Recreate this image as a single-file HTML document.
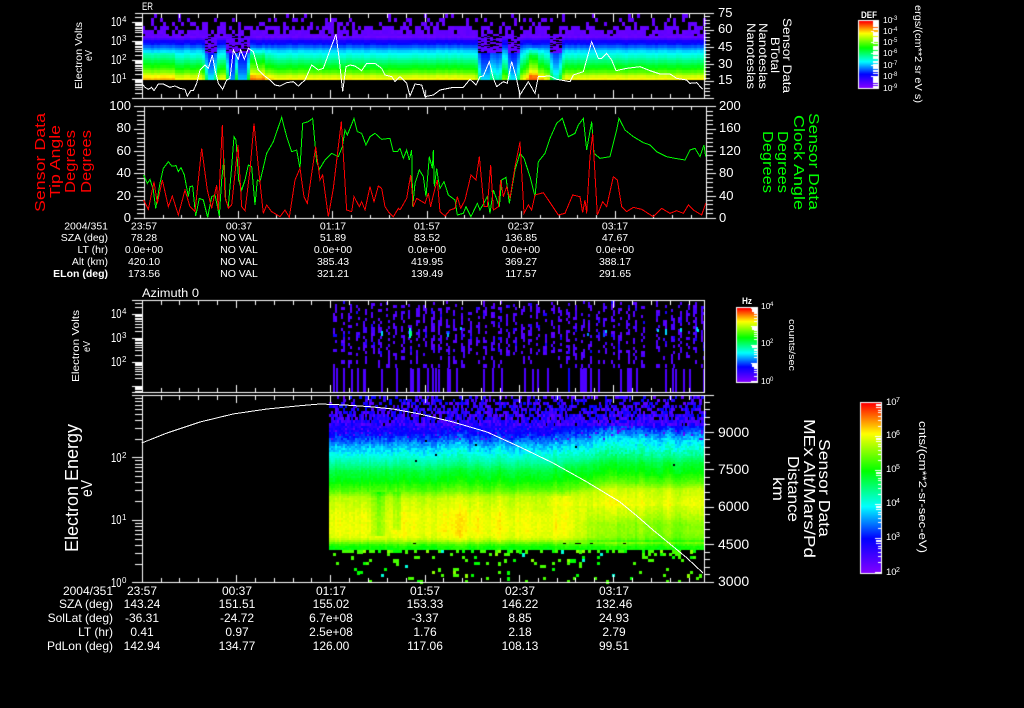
<!DOCTYPE html>
<html><head><meta charset="utf-8"><title>Sensor Data</title>
<style>
html,body{margin:0;padding:0;background:#000;width:1024px;height:708px;overflow:hidden}
#c{position:absolute;left:0;top:0;width:1024px;height:708px}
#s{position:absolute;left:0;top:0}
text{font-family:"Liberation Sans",sans-serif;fill:#fff}
.a{font-size:13px}.b{font-size:14px}
.t1 text{font-size:10.5px}.t2 text{font-size:12px}
.m text{text-anchor:middle}.e text{text-anchor:end}
.d text:not(.u){font-size:12.5px}
.u{font-size:8px}.v{font-size:8.5px}.w{font-size:6px}.x{font-size:9.5px}.y{font-size:7px}
polyline{fill:none;shape-rendering:crispEdges}
</style></head><body>
<canvas id="c" width="1024" height="708"></canvas>
<svg id="s" width="1024" height="708" viewBox="0 0 1024 708">
<!-- data lines -->
<g transform="scale(.33333)"><polyline stroke="#fff" stroke-width="3" points="425,250 435,262 445,268 455,262 462,272 475,252 490,252 510,262 525,258 540,265 555,268 562,288 572,272 580,272 590,250 600,210 615,195 625,205 637,165 645,210 655,250 668,268 680,240 690,235 700,150 715,178 722,150 733,178 745,145 760,155 775,210 790,225 810,240 825,255 840,258 860,248 880,245 895,258 915,240 935,195 955,210 970,205 990,150 1008,103 1018,180 1028,275 1038,200 1050,195 1065,198 1085,212 1100,190 1125,190 1145,205 1155,225 1175,230 1185,245 1200,230"/></g>
<g transform="translate(400,0) scale(.33333)"><polyline stroke="#fff" stroke-width="3" points="0,230 20,250 30,288 45,252 65,255 75,290 100,285 120,270 160,262 190,262 210,238 228,255 240,230 250,228 268,185 280,235 290,260 310,245 322,250 335,185 348,230 360,285 385,245 405,280 415,230 450,228 470,238 510,245 520,225 550,215 575,125 595,175 605,175 620,160 635,180 648,212 680,205 720,200 750,212 780,222 810,222 830,235 860,240 870,250 890,248 908,268"/></g>
<g transform="translate(0,100) scale(.33333)"><polyline stroke="#00ff00" stroke-width="3" points="431,225 442,250 450,238 460,270 467,325 480,250 490,205 505,185 515,198 528,197 535,215 543,203 553,225 565,290 570,260 578,258 587,348 598,295 610,300 623,352 635,290 645,285 658,348 665,240 672,175 677,300 685,320 695,200 702,110 708,120 716,240 725,270 735,240 745,195 755,200 765,315 772,240 780,245 800,160 820,125 845,52 860,110 875,155 890,150 900,205 908,70 925,65 938,55 950,185 958,208 975,180 995,160 1015,170 1027,140 1035,90 1042,105 1062,55 1072,95 1085,100 1098,135 1110,110 1125,100 1145,118 1170,115 1180,155 1192,155 1200,145"/>
<polyline stroke="#ff0000" stroke-width="3" points="431,300 445,328 462,245 472,310 487,240 505,320 517,288 535,345 555,270 570,320 585,335 605,145 622,270 635,325 650,255 655,330 667,75 675,290 685,325 695,315 714,135 725,320 735,332 750,210 762,70 775,200 790,340 800,315 815,335 840,350 855,330 868,352 885,240 900,205 912,290 922,310 947,140 960,240 968,225 985,350 1000,265 1024,65 1040,330 1055,335 1062,290 1078,320 1085,305 1095,330 1110,260 1122,305 1135,258 1145,265 1155,320 1165,335 1180,350 1195,325 1200,330"/></g>
<g transform="translate(400,100) scale(.33333)"><polyline stroke="#00ff00" stroke-width="3" points="0,145 10,175 20,150 28,180 35,150 38,320 45,250 58,210 70,230 78,290 88,170 97,205 100,150 103,260 110,205 115,240 120,265 132,245 145,285 165,300 172,345 190,340 198,320 213,350 232,310 240,330 262,290 270,340 280,270 298,320 305,240 318,232 328,310 345,210 360,160 372,175 390,230 405,290 415,185 435,160 450,115 470,70 487,55 505,110 525,100 535,75 550,55 560,150 575,65 582,160 600,175 630,170 650,90 657,55 675,90 700,110 730,128 750,135 770,155 800,170 825,175 855,180 870,150 885,145 900,170 912,135 917,170"/>
<polyline stroke="#ff0000" stroke-width="3" points="0,330 20,295 32,225 40,320 50,295 75,310 85,280 92,320 100,285 112,240 120,335 135,348 150,330 165,325 172,290 182,325 195,300 213,225 228,240 238,170 252,320 262,320 272,195 280,330 295,320 302,240 310,290 320,260 330,295 345,200 360,125 372,340 385,315 395,330 405,285 430,278 445,300 475,345 495,340 518,285 540,290 548,338 555,300 560,340 570,170 578,100 592,345 608,305 620,320 640,230 652,240 665,320 680,335 700,322 725,328 760,350 785,325 810,340 830,332 850,340 865,315 880,330 905,345 917,310"/></g>
<polyline stroke="#fff" stroke-width="1" points="141.7,443 167,433 200,422 233,414 267,409 300,405.7 320,404 345,405 370,406.7 393,409 420,414 453,422 487,432 520,447 553,463 587,482 620,502 637,516 653,530 670,544 687,558 703,573"/>

<!-- titles -->
<text x="142" y="10" font-size="11" textLength="11" lengthAdjust="spacingAndGlyphs">ER</text>
<text x="142" y="297" font-size="11.5" textLength="57" lengthAdjust="spacingAndGlyphs">Azimuth 0</text>

<!-- panel 1 labels -->
<text transform="translate(82,89) rotate(-90)" font-size="10" textLength="67" lengthAdjust="spacingAndGlyphs">Electron Volts</text>
<text transform="translate(92,61) rotate(-90)" font-size="10" textLength="11" lengthAdjust="spacingAndGlyphs">eV</text>
<g class="d">
<text x="111" y="26" textLength="10.5" lengthAdjust="spacingAndGlyphs">10</text><text x="122" y="22" class="u">4</text>
<text x="111" y="45" textLength="10.5" lengthAdjust="spacingAndGlyphs">10</text><text x="122" y="41" class="u">3</text>
<text x="111" y="64" textLength="10.5" lengthAdjust="spacingAndGlyphs">10</text><text x="122" y="60" class="u">2</text>
<text x="111" y="83" textLength="10.5" lengthAdjust="spacingAndGlyphs">10</text><text x="122" y="79" class="u">1</text>
</g>
<g class="a">
<text x="718" y="17">75</text><text x="718" y="33">60</text><text x="718" y="51">45</text><text x="718" y="68">30</text><text x="718" y="84">15</text>
</g>
<g font-size="12">
<text transform="translate(783,18) rotate(90)" textLength="75" lengthAdjust="spacingAndGlyphs">Sensor Data</text>
<text transform="translate(771,37) rotate(90)" textLength="36" lengthAdjust="spacingAndGlyphs">BTotal</text>
<text transform="translate(759,23) rotate(90)" textLength="66" lengthAdjust="spacingAndGlyphs">Nanoteslas</text>
<text transform="translate(747,23) rotate(90)" textLength="66" lengthAdjust="spacingAndGlyphs">Nanoteslas</text>
</g>
<!-- colorbar 1 -->
<text x="861" y="18" font-size="9.5" font-weight="bold" textLength="16" lengthAdjust="spacingAndGlyphs">DEF</text>
<g class="v">
<text x="883" y="23">10</text><text x="892" y="20" class="w">-3</text>
<text x="883" y="34">10</text><text x="892" y="31" class="w">-4</text>
<text x="883" y="45">10</text><text x="892" y="42" class="w">-5</text>
<text x="883" y="56">10</text><text x="892" y="53" class="w">-6</text>
<text x="883" y="68">10</text><text x="892" y="65" class="w">-7</text>
<text x="883" y="79">10</text><text x="892" y="76" class="w">-8</text>
<text x="883" y="91">10</text><text x="892" y="88" class="w">-9</text>
</g>
<text transform="translate(915,5) rotate(90)" font-size="10" textLength="98" lengthAdjust="spacingAndGlyphs">ergs/(cm**2 sr eV s)</text>

<!-- panel 2 labels -->
<g font-size="15">
<text style="fill:#f00" transform="translate(45,212) rotate(-90)" textLength="99" lengthAdjust="spacingAndGlyphs">Sensor Data</text>
<text style="fill:#f00" transform="translate(60,198) rotate(-90)" textLength="73" lengthAdjust="spacingAndGlyphs">Tip Angle</text>
<text style="fill:#f00" transform="translate(75,193) rotate(-90)" textLength="63" lengthAdjust="spacingAndGlyphs">Degrees</text>
<text style="fill:#f00" transform="translate(91,193) rotate(-90)" textLength="63" lengthAdjust="spacingAndGlyphs">Degrees</text>
</g>
<g font-size="15">
<text style="fill:#0f0" transform="translate(809,113) rotate(90)" textLength="97" lengthAdjust="spacingAndGlyphs">Sensor Data</text>
<text style="fill:#0f0" transform="translate(794,115) rotate(90)" textLength="95" lengthAdjust="spacingAndGlyphs">Clock Angle</text>
<text style="fill:#0f0" transform="translate(778,131) rotate(90)" textLength="62" lengthAdjust="spacingAndGlyphs">Degrees</text>
<text style="fill:#0f0" transform="translate(763,131) rotate(90)" textLength="62" lengthAdjust="spacingAndGlyphs">Degrees</text>
</g>
<g class="a e">
<text x="131" y="110">100</text><text x="131" y="132">80</text><text x="131" y="155">60</text><text x="131" y="177">40</text><text x="131" y="200">20</text><text x="131" y="222">0</text>
</g>
<g class="a">
<text x="719" y="110">200</text><text x="719" y="132">160</text><text x="719" y="155">120</text><text x="719" y="177">80</text><text x="719" y="200">40</text><text x="719" y="222">0</text>
</g>

<!-- table 1 -->
<g class="t1 e">
<text x="108" y="229.5">2004/351</text><text x="108" y="241">SZA (deg)</text><text x="108" y="253">LT (hr)</text><text x="108" y="265">Alt (km)</text><text x="108" y="277" font-weight="bold">ELon (deg)</text>
</g>
<g class="t1 m">
<text x="144" y="229.5">23:57</text><text x="239" y="229.5">00:37</text><text x="333" y="229.5">01:17</text><text x="427" y="229.5">01:57</text><text x="521" y="229.5">02:37</text><text x="615" y="229.5">03:17</text>
<text x="144" y="241">78.28</text><text x="239" y="241">NO VAL</text><text x="333" y="241">51.89</text><text x="427" y="241">83.52</text><text x="521" y="241">136.85</text><text x="615" y="241">47.67</text>
<text x="144" y="253">0.0e+00</text><text x="239" y="253">NO VAL</text><text x="333" y="253">0.0e+00</text><text x="427" y="253">0.0e+00</text><text x="521" y="253">0.0e+00</text><text x="615" y="253">0.0e+00</text>
<text x="144" y="265">420.10</text><text x="239" y="265">NO VAL</text><text x="333" y="265">385.43</text><text x="427" y="265">419.95</text><text x="521" y="265">369.27</text><text x="615" y="265">388.17</text>
<text x="144" y="277">173.56</text><text x="239" y="277">NO VAL</text><text x="333" y="277">321.21</text><text x="427" y="277">139.49</text><text x="521" y="277">117.57</text><text x="615" y="277">291.65</text>
</g>

<!-- panel 3 labels -->
<text transform="translate(79,382) rotate(-90)" font-size="10" textLength="72" lengthAdjust="spacingAndGlyphs">Electron Volts</text>
<text transform="translate(90,352) rotate(-90)" font-size="10" textLength="11" lengthAdjust="spacingAndGlyphs">eV</text>
<g class="d">
<text x="111" y="318" textLength="10.5" lengthAdjust="spacingAndGlyphs">10</text><text x="122" y="314" class="u">4</text>
<text x="111" y="342" textLength="10.5" lengthAdjust="spacingAndGlyphs">10</text><text x="122" y="338" class="u">3</text>
<text x="111" y="366" textLength="10.5" lengthAdjust="spacingAndGlyphs">10</text><text x="122" y="362" class="u">2</text>
</g>
<!-- colorbar 2 -->
<text x="742" y="304" font-size="9.5" font-weight="bold" textLength="10" lengthAdjust="spacingAndGlyphs">Hz</text>
<g class="v">
<text x="761" y="309">10</text><text x="770" y="306" class="w">4</text>
<text x="761" y="346">10</text><text x="770" y="343" class="w">2</text>
<text x="761" y="384">10</text><text x="770" y="381" class="w">0</text>
</g>
<text transform="translate(789,319) rotate(90)" font-size="9.5" textLength="52" lengthAdjust="spacingAndGlyphs">counts/sec</text>

<!-- panel 4 labels -->
<text transform="translate(78,552) rotate(-90)" font-size="18" textLength="128" lengthAdjust="spacingAndGlyphs">Electron Energy</text>
<text transform="translate(92,497) rotate(-90)" font-size="16" textLength="17" lengthAdjust="spacingAndGlyphs">eV</text>
<g class="d">
<text x="111" y="462" textLength="10.5" lengthAdjust="spacingAndGlyphs">10</text><text x="122" y="458" class="u">2</text>
<text x="111" y="524" textLength="10.5" lengthAdjust="spacingAndGlyphs">10</text><text x="122" y="520" class="u">1</text>
<text x="111" y="587" textLength="10.5" lengthAdjust="spacingAndGlyphs">10</text><text x="122" y="583" class="u">0</text>
</g>
<g class="b">
<text x="718" y="437">9000</text><text x="718" y="474">7500</text><text x="718" y="511">6000</text><text x="718" y="549">4500</text><text x="718" y="586">3000</text>
</g>
<g font-size="15.5">
<text transform="translate(819,439) rotate(90)" textLength="98" lengthAdjust="spacingAndGlyphs">Sensor Data</text>
<text transform="translate(804,419) rotate(90)" textLength="139" lengthAdjust="spacingAndGlyphs">MEx Alt/Mars/Pd</text>
<text transform="translate(788,456) rotate(90)" textLength="66" lengthAdjust="spacingAndGlyphs">Distance</text>
<text transform="translate(773,477) rotate(90)" textLength="24" lengthAdjust="spacingAndGlyphs">km</text>
</g>
<!-- colorbar 3 -->
<g class="x">
<text x="886" y="405">10</text><text x="896" y="402" class="y">7</text>
<text x="886" y="438">10</text><text x="896" y="435" class="y">6</text>
<text x="886" y="472">10</text><text x="896" y="469" class="y">5</text>
<text x="886" y="506">10</text><text x="896" y="503" class="y">4</text>
<text x="886" y="540">10</text><text x="896" y="537" class="y">3</text>
<text x="886" y="575">10</text><text x="896" y="572" class="y">2</text>
</g>
<text transform="translate(919,421) rotate(90)" font-size="11" textLength="132" lengthAdjust="spacingAndGlyphs">cnts/(cm**2-sr-sec-eV)</text>

<!-- table 2 -->
<g class="t2 e">
<text x="113" y="595">2004/351</text><text x="113" y="608">SZA (deg)</text><text x="113" y="622">SolLat (deg)</text><text x="113" y="636">LT (hr)</text><text x="113" y="650">PdLon (deg)</text>
</g>
<g class="t2 m">
<text x="142" y="595">23:57</text><text x="237" y="595">00:37</text><text x="331" y="595">01:17</text><text x="425" y="595">01:57</text><text x="520" y="595">02:37</text><text x="614" y="595">03:17</text>
<text x="142" y="608">143.24</text><text x="237" y="608">151.51</text><text x="331" y="608">155.02</text><text x="425" y="608">153.33</text><text x="520" y="608">146.22</text><text x="614" y="608">132.46</text>
<text x="142" y="622">-36.31</text><text x="237" y="622">-24.72</text><text x="331" y="622">6.7e+08</text><text x="425" y="622">-3.37</text><text x="520" y="622">8.85</text><text x="614" y="622">24.93</text>
<text x="142" y="636">0.41</text><text x="237" y="636">0.97</text><text x="331" y="636">2.5e+08</text><text x="425" y="636">1.76</text><text x="520" y="636">2.18</text><text x="614" y="636">2.79</text>
<text x="142" y="650">142.94</text><text x="237" y="650">134.77</text><text x="331" y="650">126.00</text><text x="425" y="650">117.06</text><text x="520" y="650">108.13</text><text x="614" y="650">99.51</text>
</g>
</svg>
<script>
(function(){
var g=document.getElementById('c').getContext('2d');
g.fillStyle='#000';g.fillRect(0,0,1024,708);
var seed=12345;
function R(){seed|=0;seed=seed+0x6D2B79F5|0;var t=Math.imul(seed^seed>>>15,1|seed);t=t+Math.imul(t^t>>>7,61|t)^t;return((t^t>>>14)>>>0)/4294967296;}
var S=[[0,128,0,255],[.2,0,0,255],[.39,0,255,255],[.6,0,255,0],[.82,255,255,0],[1,255,0,0]];
function pal(t){t=Math.max(0,Math.min(1,t));for(var i=1;i<S.length;i++){if(t<=S[i][0]){var a=S[i-1],b=S[i],k=(t-a[0])/(b[0]-a[0]);return 'rgb('+Math.round(a[1]+(b[1]-a[1])*k)+','+Math.round(a[2]+(b[2]-a[2])*k)+','+Math.round(a[3]+(b[3]-a[3])*k)+')';}}return 'rgb(255,0,0)';}
function lerp(st,y){if(y<=st[0][0])return st[0][1];for(var i=1;i<st.length;i++){if(y<=st[i][0]){var k=(y-st[i-1][0])/(st[i][0]-st[i-1][0]);return st[i-1][1]+(st[i][1]-st[i-1][1])*k;}}return st[st.length-1][1];}
function cell(x,y,w,h,t){g.fillStyle=pal(t);g.fillRect(x,y,w,h);}

/* ---- panel 1 spectrogram ---- */
var st1=[[36,.03],[38,.06],[41,.17],[43,.2],[45,.24],[48,.3],[52,.38],[57,.44],[63,.53],[68,.6],[73,.7],[77,.8],[80,.83]];
var dips=[[208,214,.6],[230,234,.7],[239,246,.65],[481,490,.62],[495,500,.5],[510,517,.6],[553,559,.5]];
var bulge=[[252,263,.09],[531,537,.14],[526,542,.04],[266,272,.03]];
for(var x=142;x<704;x+=3){
  var cn=(R()-.5)*.025, d=0,b=0, cx3=x+1.5;
  dips.forEach(function(q){var c=(q[0]+q[1])/2,hw=(q[1]-q[0])/2,di=Math.abs(cx3-c)-hw;var s=di<=0?q[2]:q[2]*Math.max(0,1-di/5);if(s>d)d=s;});
  bulge.forEach(function(q){if(x+2>=q[0]&&x<=q[1])b=Math.max(b,q[2]);});
  var left=x<173?.04:0;
  for(var y=14;y<80;y+=1){
    if(y<36){
      if(y%4!=2&&y!=14)continue;
      var p=y>=34?.95:y>=30?.8:y>=26?.55:y>=22?.3:y>=18?.2:.1;
      if(d>.3)p*=.6;
      if(R()<p){var h=Math.min(4,36-y);cell(x,y,3,h,.035+R()*.02);}
    }else{
      var yy=Math.floor(y/2.5)*2.5+1.2;
      var t=lerp(st1,yy)+cn+left*(yy>52?1:0);
      if(b&&yy>46)t=Math.min(.93,t+b*Math.min(1,(yy-46)/10));
      if(d>0){
        if(yy<52&&d>.3){ if(R()<.3)continue; t=.03+R()*.04; }
        else t=t*(1-d)+.05*d/.6;
      }
      cell(x,y,3,1,t);
    }
  }
}

/* ---- panel 3 spectrogram ---- */
function speck(x,y,w,h,t){cell(x,y,w,h,t);}
for(var c=334,n=0;c<702;c+=7.5,n++){
  if(c>648&&c<655)continue;
  var top=301+R()*4, bot=352+R()*4;
  for(var col=-1;col<=1;col+=2){
    var cx=Math.round(c)+col;
    for(var y=top;y<bot;y+=3){
      if(R()<.48)speck(cx,Math.round(y),2,3,.05+R()*.05+(R()<.08?.09:0));
    }
    for(var y=356;y<368;y+=4){
      if(R()<.28)speck(cx,y,2,4,.06+R()*.03);
    }
  }
}
var bars=[40,48,68,92,110,130,133,182,228,270,276,290,293,320,335,345,355,382,388,408,490,515,542,612,635,650,680,745,780,785,790,795,810,833,900,920,925,930,948,1035,1055,1065,1088,1108,1148];
bars.forEach(function(z){var x=Math.round(320+z/3);speck(x,368+Math.floor(R()*2),2,24,z==745?.18:.08);});
[[409,328,2,10,.42],[410,331,2,5,.5],[447,331,2,5,.26],[447,333,2,4,.33],[460,327,2,3,.34],[603,333,2,4,.26],[605,330,2,3,.35],[657,329,2,3,.36],[665,329,2,6,.36],[680,328,2,4,.36],[696,327,2,4,.34],[697,329,2,3,.38],[587,333,2,3,.3],[381,331,2,5,.36]].forEach(function(a){speck(a[0],a[1],a[2],a[3],a[4]);});

/* ---- panel 4 spectrogram ---- */
var st4=[[426,.16],[432,.2],[437,.25],[447,.36],[463,.48],[470,.55],[480,.6],[490,.68],[497,.77],[515,.81],[530,.815],[537,.8],[541,.72],[545,.62],[550,.6]];
var prev=0;
for(var x=329;x<704;x+=2){
  prev=prev*.6+(R()-.5)*.05;
  var shift=0;
  if(x>560)shift=Math.min(1,(x-560)/40)*8;
  if(x>460&&x<=560)shift=(x-460)/100*1.5;
  /* sparse noise on top */
  for(var y=396;y<426;y+=3){
    var p=y<402?.32:y<408?.42:y<414?.58:y<420?.78:.93;
    if(R()<p){cell(x,y,2+(R()<.5?1:0),3,.04+R()*.17);}
  }
  for(var y=426;y<550;y+=2){
    var yy=y+ (y<505?shift:0);
    var t=lerp(st4,yy);
    if(x>560&&y>=505&&y<541){t=t-Math.min(1,(x-560)/50)*Math.min(1,(y-505)/18)*.1;}
    if(x>=368&&x<=388&&y>490&&y<535)t-=.09*(1-Math.abs(x-378)/11);
    if(x>=392&&x<=400&&y>490&&y<530)t-=.05;
    if(x>545&&x<570&&y>495&&y<505)t+=.02;
    t+=prev*(y>450?.7:1)+(R()-.5)*(y<455?.08:.03);
    if(y<440&&R()<.05){t=.05;}
    if(y<470&&y>436&&R()<.004){continue;}
    cell(x,y,2,2,t);
  }
}
/* rough top of green strip */
for(var x=329;x<704;x+=3){ if(R()<.1){g.fillStyle='#000';g.fillRect(x,543,3,1);} }
/* bottom specks */
for(var x=330;x<702;x+=3){
  for(var y=550;y<582;y+=3){
    var p=y<553?.55:y<556?.16:.085;
    if(x<340&&y>553)p=.04;
    if(R()<p){
      var q=R();var t=q<.55?.66:q<.85?.6:q<.97?.72:.42;
      var w=R()<.1?6:3;
      cell(x,y,w,R()<.2?4:3,t);
    }
  }
}

/* ---- axes ---- */
g.fillStyle='#fff';
function H(x0,x1,y){g.fillStyle='#fff';g.fillRect(Math.round(x0),Math.round(y),Math.round(x1-x0),1);}
function V(x,y0,y1){g.fillStyle='#fff';g.fillRect(Math.round(x),Math.round(y0),1,Math.round(y1-y0));}
function ticks(x0,x1,yt,yb,mn,mj){for(var k=0;;k++){var x=x0+k*18.86;if(x>=x1)break;var l=k%5==0?mj:mn;V(x,yt,yt+l);V(x,yb-l+1,yb+1);}}
function logT(xl,y0,dec,top,bot,mn,mj){for(var d=-3;d<6;d++)for(var m=1;m<=9;m++){var y=y0-d*dec-Math.log10(m)*dec;if(y<top||y>bot)continue;H(xl-(m==1?mj:mn),xl,y);}}
function linT(xl,xdir,majors,sp,sub,top,bot,mn,mj){var y0=majors;for(var k=-60;k<60;k++){var y=y0+k*sp/sub;if(y<top-.5||y>bot+.5)continue;var l=(k%sub==0)?mj:mn;if(xdir>0)H(xl,xl+l,y);else H(xl-l,xl,y);}}

/* panel 1 */
H(135,705,13);H(132,705,98);V(141.7,13,98);V(704,13,98);
ticks(141.7,704,13,98,5,9);
logT(141.7,79.3,19,13,98,6.5,9.5);
linT(704,1,81,17,5,13,98,6,10);
/* panel 2 */
H(134,707,106);H(134,707,218);V(143.5,106,218);V(706,106,218);
ticks(143.7,706,106,217.5,4,8);
linT(143.5,-1,106.3,22.3,5,106,218,6.5,10);
linT(706,1,217.8,22.3,5,106,218,6.5,10);
/* panel 3 */
H(132,705,300);H(132,705,392);V(141.5,300,392);V(704,300,392);
ticks(141.7,704,300,392,5,8);
logT(141.7,361.7,23.8,300,392,6.5,9.5);
/* panel 4 */
H(132,705,395);H(132,705,582);V(141.5,395,582);V(704,395,582);
ticks(141.7,704,395,582,5,8);
logT(141.7,582.3,62.4,395,582,6.5,9.5);
linT(704,1,581.5,37.5,5,395,582,6,10);
H(704,714,395);

/* ---- colour bars ---- */
function bar(x0,x1,y0,y1){for(var y=y0;y<=y1;y++){var t=(y1-y)/(y1-y0);g.fillStyle=pal(t);g.fillRect(x0,y,x1-x0+1,1);}
 g.fillStyle='#fff';g.fillRect(x0-1,y0-1,x1-x0+3,1);g.fillRect(x0-1,y1+1,x1-x0+3,1);g.fillRect(x0-1,y0-1,1,y1-y0+3);g.fillRect(x1+1,y0-1,1,y1-y0+3);}
/* bar 1 with white strip carrying coloured ticks */
bar(859,877,21,87);
g.fillStyle='#fff';g.fillRect(873,21,5,67);
[[27,.93],[30,.88],[31,.87],[36,.8],[42,.7],[44,.66],[45,.65],[50,.56],[55,.5],[59,.42],[60,.41],[63,.37],[69,.28],[72,.22],[74,.2],[75,.19],[83,.06],[85,.04]].forEach(function(a){g.fillStyle=pal(a[1]);g.fillRect(872,a[0],6,1);});
[31,42,53,65,76].forEach(function(y){g.fillStyle='#fff';g.fillRect(871,y,3,1);});

function cbT(x1,y0,dec,top,bot){for(var d=-1;d<8;d++)for(var m=1;m<=9;m++){var y=y0-d*dec-Math.log10(m)*dec;if(y<top||y>bot)continue;var l=m==1?6:(m>=7?5:3);g.fillStyle='#fff';g.fillRect(x1-l+1,Math.round(y),l,1);}}
bar(737,756,308,381);
cbT(756,381,18.25,308,381);
bar(861,880,403,572);
cbT(880,572,34,403,572);
})();
</script>
</body></html>
